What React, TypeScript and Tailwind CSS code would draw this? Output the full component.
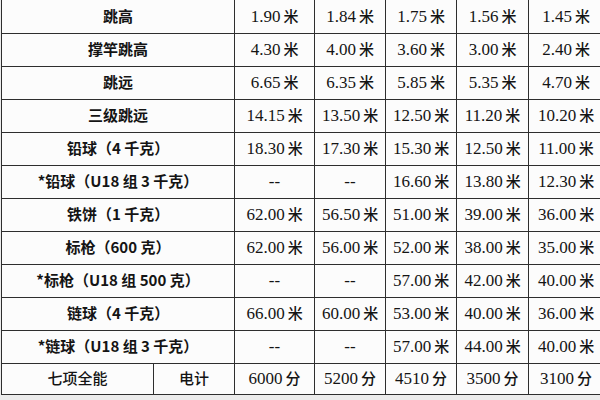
const rows: [string, string[]][] = [
  ["跳高", ["1.90", "1.84", "1.75", "1.56", "1.45"]],
  ["撑竿跳高", ["4.30", "4.00", "3.60", "3.00", "2.40"]],
  ["跳远", ["6.65", "6.35", "5.85", "5.35", "4.70"]],
  ["三级跳远", ["14.15", "13.50", "12.50", "11.20", "10.20"]],
  ["铅球（4 千克）", ["18.30", "17.30", "15.30", "12.50", "11.00"]],
  ["*铅球（U18 组 3 千克）", ["--", "--", "16.60", "13.80", "12.30"]],
  ["铁饼（1 千克）", ["62.00", "56.50", "51.00", "39.00", "36.00"]],
  ["标枪（600 克）", ["62.00", "56.00", "52.00", "38.00", "35.00"]],
  ["*标枪（U18 组 500 克）", ["--", "--", "57.00", "42.00", "40.00"]],
  ["链球（4 千克）", ["66.00", "60.00", "53.00", "40.00", "36.00"]],
  ["*链球（U18 组 3 千克）", ["--", "--", "57.00", "44.00", "40.00"]],
];

const points = ["6000", "5200", "4510", "3500", "3100"];

function Value({ v, unit }: { v: string; unit: string }) {
  if (v === "--") return <span className="font-['Liberation_Serif',serif] text-[17px]">--</span>;
  return (
    <span className="whitespace-nowrap">
      <span className="font-['Liberation_Serif',serif] text-[17px]">{v}</span>
      <span className="ml-[3px]">{unit}</span>
    </span>
  );
}

export default function App() {
  const cell = "border-[1.5px] border-[#2e2e2e] text-center align-middle p-0";
  return (
    <div className="w-[600px] h-[400px] overflow-hidden bg-[#ececec] font-['Noto_Sans_CJK_SC',sans-serif] text-[15px] text-[#141414]">
      <table className="table-fixed border-collapse bg-[#fcfcfc] w-[602px] ml-[1px]">
        <colgroup>
          <col className="w-[152px]" />
          <col className="w-[81px]" />
          <col className="w-[80px]" />
          <col className="w-[71px]" />
          <col className="w-[71px]" />
          <col className="w-[72px]" />
          <col className="w-[75px]" />
        </colgroup>
        <tbody>
          {rows.map(([name, vals], i) => (
            <tr key={name} className="h-[33px]">
              <td colSpan={2} className={`${cell} font-semibold ${i === 0 ? "border-t-0" : ""}`}>
                {name}
              </td>
              {vals.map((v, j) => (
                <td key={j} className={`${cell} font-medium ${i === 0 ? "border-t-0" : ""}`}>
                  <Value v={v} unit="米" />
                </td>
              ))}
            </tr>
          ))}
          <tr className="h-[31px]">
            <td className={`${cell} font-medium`}>七项全能</td>
            <td className={`${cell} font-medium`}>电计</td>
            {points.map((p) => (
              <td key={p} className={`${cell} font-medium`}>
                <Value v={p} unit="分" />
              </td>
            ))}
          </tr>
        </tbody>
      </table>
    </div>
  );
}
